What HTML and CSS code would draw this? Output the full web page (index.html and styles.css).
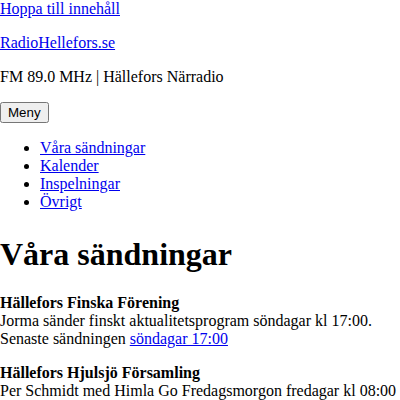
FILE: index.html
```html
<!DOCTYPE html>
<html lang="sv">
<head>
<meta charset="utf-8">
<title>RadioHellefors.se</title>
<link rel="stylesheet" href="styles.css">
</head>
<body class="page">
<a class="skip-link" href="#innehall">Hoppa till innehåll</a>
<header class="site-header">
  <p class="site-title"><a href="#">RadioHellefors.se</a></p>
  <p class="site-tagline">FM 89.0 MHz | Hällefors Närradio</p>
  <nav class="site-nav">
    <button class="menu-toggle" type="button">Meny</button>
    <ul class="nav-list">
      <li><a href="#">Våra sändningar</a></li>
      <li><a href="#">Kalender</a></li>
      <li><a href="#">Inspelningar</a></li>
      <li><a href="#">Övrigt</a></li>
    </ul>
  </nav>
</header>
<main id="innehall" class="content">
  <h1 class="page-title">Våra sändningar</h1>
  <p class="program">
    <strong>Hällefors Finska Förening</strong><br>
    Jorma sänder finskt aktualitetsprogram söndagar kl 17:00.<br>
    Senaste sändningen <a href="#">söndagar 17:00</a>
  </p>
  <p class="program">
    <strong>Hällefors Hjulsjö Församling</strong><br>
    Per Schmidt med Himla Go Fredagsmorgon fredagar kl 08:00
  </p>
</main>
</body>
</html>
```
FILE: styles.css
```css
.page {
  margin: 0;
  font-family: "Liberation Serif", "Times New Roman", serif;
  font-size: 16px;
  color: #000;
  background: #fff;
}

.site-tagline,
.site-title {
  margin: 16px 0;
}

.menu-toggle {
  font-family: "Liberation Sans", Arial, sans-serif;
  font-size: 13.33px;
}

.nav-list {
  margin: 16px 0;
  padding-left: 40px;
}

.page-title {
  font-size: 2em;
  margin: 25px 0 21px;
}

.program {
  margin: 16px 0;
}
```
